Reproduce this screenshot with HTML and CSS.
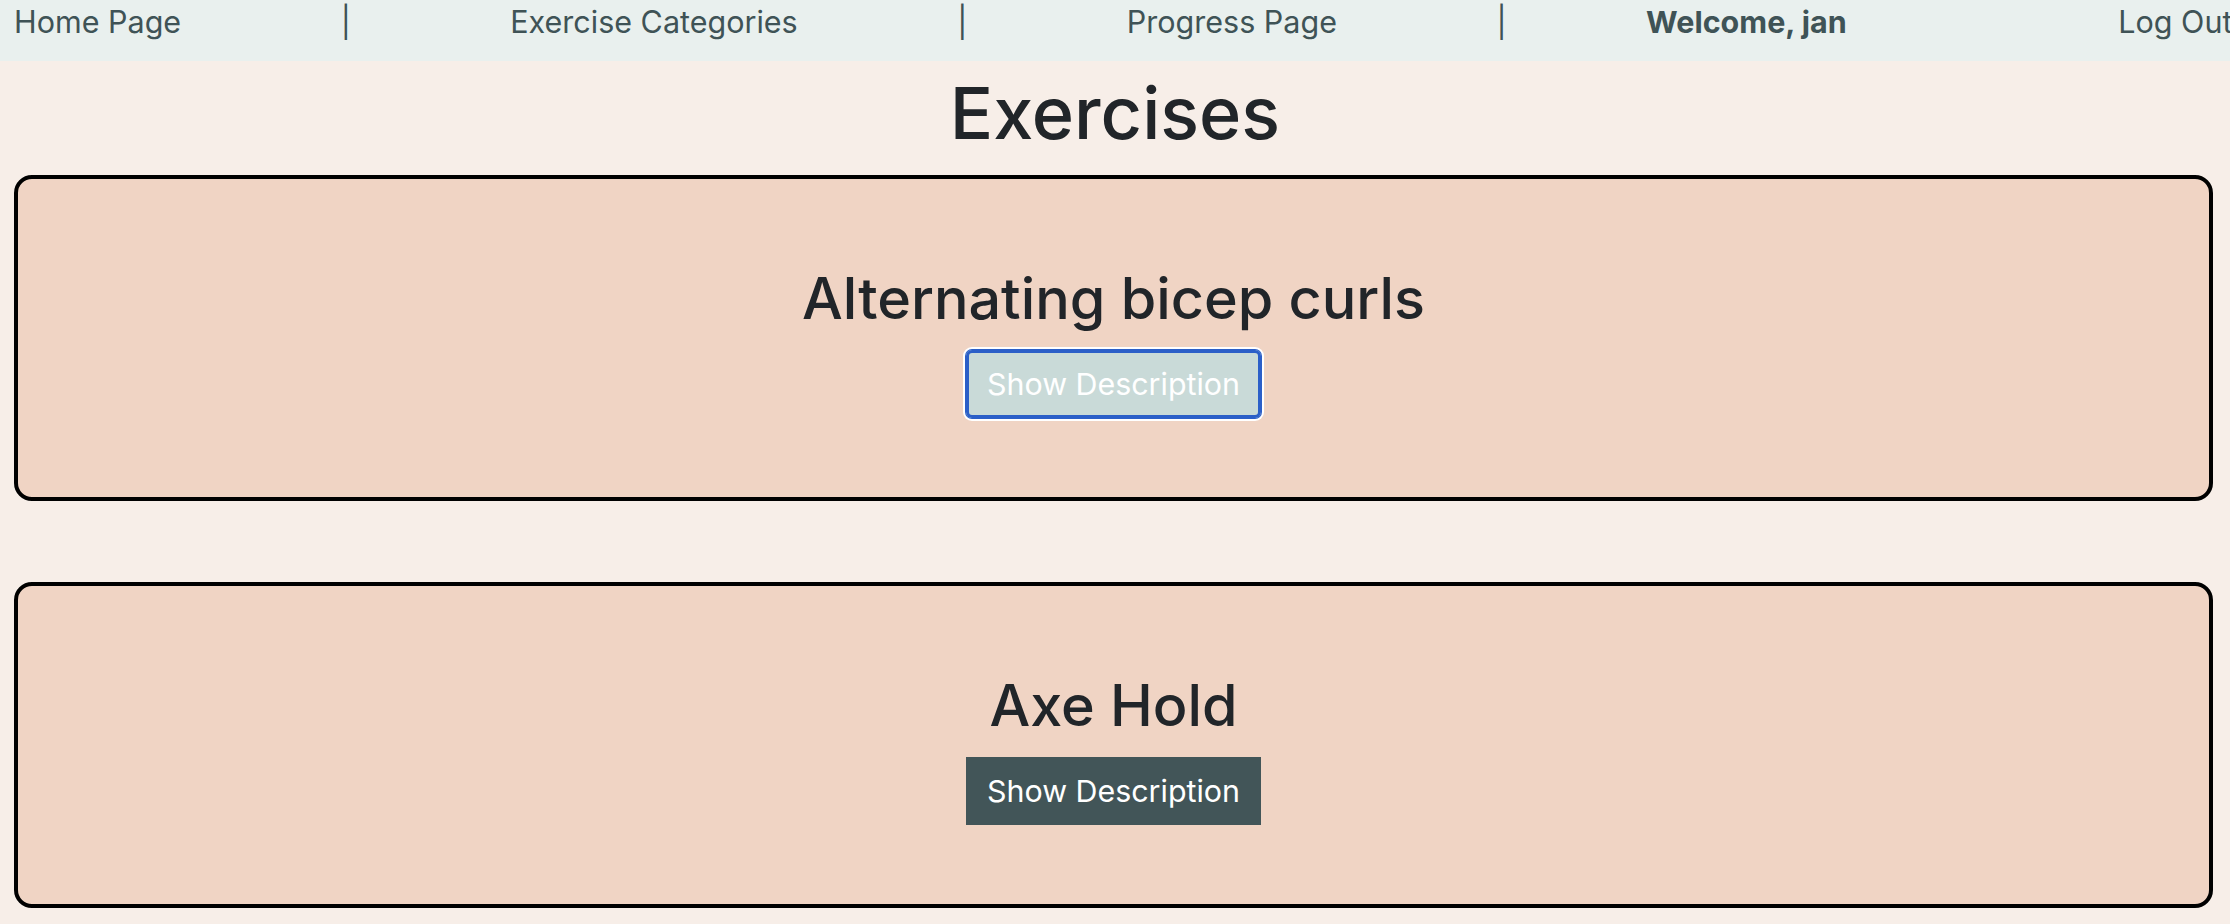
FILE: index.html
```html
<!DOCTYPE html>
<html lang="en">
<head>
<meta charset="utf-8">
<title>Exercises</title>
<link rel="stylesheet" href="styles.css">
</head>
<body>
<nav class="topnav">
  <a class="nav-link home" href="#">Home Page</a>
  <span class="sep">|</span>
  <a class="nav-link" href="#">Exercise Categories</a>
  <span class="sep">|</span>
  <a class="nav-link" href="#">Progress Page</a>
  <span class="sep">|</span>
  <span class="welcome">Welcome, jan</span>
  <a class="nav-link logout" href="#">Log Out</a>
</nav>
<main class="content">
  <h1 class="page-title">Exercises</h1>
  <div class="card-list">
    <section class="card">
      <h2 class="card-title">Alternating bicep curls</h2>
      <button class="btn btn-focused" type="button">Show Description</button>
    </section>
    <section class="card">
      <h2 class="card-title">Axe Hold</h2>
      <button class="btn" type="button">Show Description</button>
    </section>
  </div>
</main>
</body>
</html>
```
FILE: styles.css
```css
html, body {
  margin: 0;
  padding: 0;
}
body {
  background: #f7eee8;
  font-family: Inter, "Noto Sans", "Liberation Sans", sans-serif;
  color: #212529;
  overflow-x: hidden;
}
.topnav {
  height: 61px;
  background: #e9f0ee;
  display: flex;
  align-items: flex-start;
  padding-left: 14px;
  gap: 159.5px;
  white-space: nowrap;
  overflow: hidden;
}
.nav-link, .sep, .welcome {
  font-size: 30.5px;
  line-height: 36px;
  padding-top: 4px;
  color: #3f5356;
  text-decoration: none;
}
.welcome {
  font-weight: 700;
  margin-left: -20px;
}
.logout {
  margin-left: 112px;
}
.content {
  display: flex;
  flex-direction: column;
}
.page-title {
  margin: 9px 0 19px;
  font-size: 72px;
  line-height: 1.2;
  font-weight: 500;
  text-align: center;
}
.card-list {
  display: flex;
  flex-direction: column;
  gap: 81px;
  padding: 0 17px 0 14px;
}
.card {
  box-sizing: border-box;
  height: 326px;
  border: 4px solid #000;
  border-radius: 18px;
  background: #f0d4c4;
  display: flex;
  flex-direction: column;
  align-items: center;
  padding-top: 83px;
}
.card-title {
  margin: 0;
  font-size: 57.5px;
  line-height: 72px;
  font-weight: 500;
}
.btn {
  margin-top: 16px;
  height: 68px;
  padding: 0 21px;
  border: 0;
  border-radius: 0;
  background: #425558;
  color: #fff;
  font-family: inherit;
  font-size: 30.4px;
  font-weight: 400;
}
.btn-focused {
  background: #c9dad8;
  border-radius: 6px;
  box-shadow: inset 0 0 0 3px #2b5fc8, 0 0 0 1px #2b5fc8, 0 0 0 3px #fff;
}
```
